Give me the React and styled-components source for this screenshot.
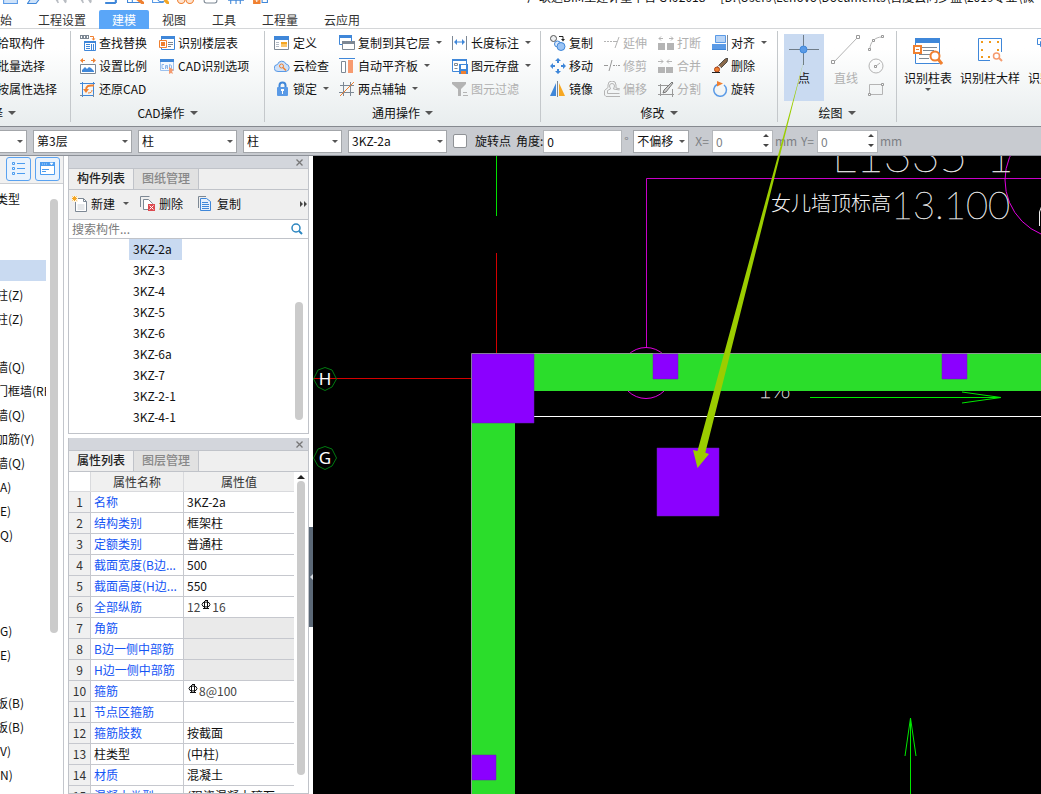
import React from "react";
import styled, { createGlobalStyle, css } from "styled-components";

const GlobalStyle = createGlobalStyle`
  *, *::before, *::after { box-sizing: border-box; }
  body {
    margin: 0;
    overflow: hidden;
    background: #fff;
    color: #111;
    font: 12px/16px "Noto Sans CJK SC", "Noto Sans", sans-serif;
  }
  button, input, select { font: inherit; color: inherit; margin: 0; }
  svg { display: block; flex: none; }
`;

const BLUE = "#3f87d9";
const SOFT = "#5a9ae6";
const ORANGE = "#f08030";
const GREY = "#7d8894";
const OFF = "#b4b4b4";

/* ---------- icons ---------- */

const ICONS = {
  find: (
    <>
      <path d="M0 0h9v4H0z" fill={GREY} /><path d="M1 1h1v2H1zM4 1h1v2H4zM7 1h1v2H7z" fill="#fff" />
      <path d="M10 1.500h3.500V4" fill="none" stroke={ORANGE} /><path d="M11.500 3.500h4l-2 2z" fill={ORANGE} />
      <path d="M4.500 6.500h11v9h-11z" fill="#fff" stroke={BLUE} /><path d="M4 6h12v2H4z" fill={BLUE} />
      <path d="M6 9.500h4M6 11.500h4M6 13.500h4M11.500 9v6M13.500 9v6" stroke={BLUE} />
    </>
  ),
  scale: (
    <>
      <path d="M0 2.500L3 0v2h2v1H3v2zM16 2.500L13 0v2h-2v1h2v2z" fill={ORANGE} />
      <path d="M.5 6.500h15v9H.5z" fill="#fff" stroke={GREY} /><path d="M2 14v-2l3-3 2 2 2-2 2 1 1 1 2 2v1z" fill={BLUE} />
    </>
  ),
  restore: (
    <>
      <path d="M2.500 1v15M13.500 1v12M0 2.500h15M2 14.500h12" stroke={BLUE} fill="none" /><path d="M0 14.500h3M13.500 13v3" stroke={GREY} />
      <path d="M6 9.500C6 5 8 4 14 4.500" fill="none" stroke={ORANGE} strokeWidth="2" /><path d="M3 8h6l-3 4z" fill={ORANGE} />
      <path d="M8 12c3 0 4-1 4-3" fill="none" stroke={ORANGE} />
    </>
  ),
  floors: (
    <>
      <path d="M2.500 1.500h13v13h-13z" fill="#fff" stroke={BLUE} /><path d="M2 1h14v3H2z" fill={BLUE} />
      <path d="M9 7.500h5M9 9.500h5M9 11.500h3" stroke={GREY} /><path d="M.5 5.500h7v7h-7z" fill="#fff" stroke={ORANGE} /><path d="M2 7h4v4H2z" fill={ORANGE} />
    </>
  ),
  cadopt: (
    <>
      <path d="M1.500 1.500h13v11h-13z" fill="#f4f9ff" stroke="#9cc1ee" /><path d="M1 1h14v3H1z" fill={BLUE} />
      <path d="M5 6.500H3v4h2M6.500 11V7.500h2V11M6.500 9h2M10.500 6.500v4h2v-3z" fill="none" stroke="#8db6ea" />
      <path d="M10 9l5 3-2 1 1 3-2-1-2 1z" fill="#f59c70" />
    </>
  ),
  define: (
    <>
      <path d="M.5 1.500h14v13H.5z" fill="#fff" stroke={GREY} /><path d="M0 1h15v4H0z" fill={BLUE} />
      <path d="M7 7h6v2H7z" fill="#f5a623" /><path d="M7 9h6v3H7z" fill="#fbc66b" /><path d="M2 7.500h3M2 9.500h3M2 11.500h3" stroke="#b4bcc6" />
    </>
  ),
  cloud: (
    <>
      <path d="M4 13.500a3.500 3.500 0 0 1-.5-7A4.500 4.500 0 0 1 12 6a3.800 3.800 0 0 1 0 7.500z" fill="#cfe1f8" stroke={SOFT} />
      <circle cx="7.500" cy="8" r="2" fill="none" stroke={ORANGE} /><path d="M9 9.500l3 3" stroke={ORANGE} strokeWidth="1.500" />
    </>
  ),
  lock: (
    <>
      <path d="M5.500 7V4.500a3 3 0 0 1 6 0V7" fill="none" stroke={BLUE} strokeWidth="2" /><rect x="3" y="6" width="11" height="9" rx="1" fill={SOFT} />
      <path d="M8 8h1v5H8zM7 8h3v2H7z" fill="#fff" />
    </>
  ),
  layers: (
    <>
      <path d="M.5 1.500h12v8H.5z" fill="#fff" stroke={BLUE} /><path d="M0 0h13v3H0z" fill={BLUE} />
      <path d="M3.500 6.500h12v8h-12z" fill="#fff" stroke={GREY} /><path d="M3 6h13v3H3z" fill={GREY} />
    </>
  ),
  align: (
    <>
      <path d="M0 0h16v1H0z" fill={BLUE} /><path d="M2.500 3.500h4v11h-4z" fill="#fff" stroke={GREY} /><path d="M9 2h5v13H9z" fill="#f79b70" />
    </>
  ),
  axis: (
    <>
      <path d="M4.500 1v14M11.500 1v14M1 4.500h14M0 11.500h15" stroke={GREY} fill="none" /><path d="M1 15L15 1" stroke={ORANGE} fill="none" />
    </>
  ),
  length: (
    <>
      <path d="M.5 1v14M14.500 1v14" stroke={GREY} /><path d="M2 7l3-3v2.500h5V4l3 3-3 3V7.500H5V10z" fill={BLUE} />
    </>
  ),
  save: (
    <>
      <path d="M.5 1.500h14v12H.5z" fill="#fff" stroke={BLUE} /><path d="M0 1h15v2H0z" fill={BLUE} />
      <path d="M2.500 5.500h3v2h-3zM2.500 10.500h3" stroke={GREY} fill="none" /><path d="M7 6h9v10H7z" fill={BLUE} /><path d="M9 7h5v4H9z" fill="#fff" /><path d="M9 13h5v3H9z" fill={ORANGE} />
    </>
  ),
  filter: (
    <>
      <path d="M0 1h14v2L9 8v7H6V8L0 3z" fill={OFF} /><path d="M11 11.500h4M11 14.500h5" stroke={OFF} />
    </>
  ),
  copy: (
    <>
      <circle cx="3.500" cy="3.500" r="3" fill="#eef0f2" stroke="#555" /><path d="M9 1.500h4V5" fill="none" stroke="#222" /><path d="M11 4h4l-2 2.500z" fill="#222" />
      <circle cx="7.500" cy="9" r="3" fill="#dfeafa" stroke={BLUE} /><circle cx="11" cy="11.500" r="4" fill="#9cc4f4" stroke={BLUE} />
    </>
  ),
  move: (
    <path d="M8 0l3 3H9v2H7V3H5zM8 16l-3-3h2v-2h2v2h2zM0 8l3-3v2h2v2H3v2zM16 8l-3 3V9h-2V7h2V5z" fill={BLUE} />
  ),
  mirror: (
    <>
      <path d="M6 2v13H0z" fill={BLUE} /><path d="M9 2v13h6z" fill="#f7a823" /><path d="M7.500 0v16" stroke={GREY} />
    </>
  ),
  extend: <path d="M0 6.500h2M3 6.500h2M6 6.500h2M9 6.500h4M15 2l-4 11" stroke={OFF} fill="none" />,
  trim: <path d="M0 7.500h4M9 7.500h2M12 7.500h1M14 7.500h2M8 2L5 13" stroke="#999" fill="none" />,
  offset: (
    <path d="M6.500 8l-1-3a2.500 2.500 0 1 1 5 0l-1 3 6 1M15.500 12.500h-12v-3L6.500 8M16 15.500H2L.5 14V9.500L4 6.500V4a4 4 0 0 1 8 0v3l4 1" fill="none" stroke={OFF} />
  ),
  breakup: (
    <>
      <path d="M0 8h7v7H0zM9 8h7v7H9z" fill={OFF} /><path d="M1 3.500h4M3 1.500l-2 2 2 2M15 3.500h-4M13 1.500l2 2-2 2" stroke={OFF} fill="none" />
    </>
  ),
  merge: (
    <>
      <path d="M0 9h7v6H0zM8 9h7v6H8z" fill={OFF} /><path d="M0 3.500h5M3 1.500l2 2-2 2M14 3.500H9M11 1.500l-2 2 2 2" stroke={OFF} fill="none" />
    </>
  ),
  split: (
    <>
      <path d="M0 4.500h10M2.500 3v12M0 13.500h16M14.500 8v8" stroke="#999" fill="none" /><path d="M5 12l1-3 8-8 1 1-7 9z" fill="#ccc" stroke="#777" />
    </>
  ),
  alignto: (
    <>
      <path d="M3.500.5h10v7h-10z" fill="#b8d4f6" stroke={SOFT} /><path d="M0 9h14v6H0z" fill={SOFT} /><path d="M0 14.500h14" stroke={BLUE} /><path d="M15.500 0v16" stroke={GREY} />
    </>
  ),
  erase: (
    <>
      <path d="M5 9L13 1l3-1-1 4-7 7z" fill="#8a6a4c" stroke="#333" strokeWidth=".8" /><path d="M6 8l3 3" stroke="#eee" strokeWidth="2" /><circle cx="5" cy="11.500" r="2.500" fill={ORANGE} stroke="#a8421a" /><path d="M0 14.500h8" stroke="#222" />
    </>
  ),
  rotate: (
    <>
      <path d="M5 3.500a6.300 6.300 0 1 0 7 .5" fill="none" stroke={SOFT} strokeWidth="1.500" /><path d="M5 0l6 2.500L5 5.500z" fill={ORANGE} />
    </>
  ),
  arc: (
    <>
      <path d="M2 14C2 7 7 2 14 2" fill="none" stroke={OFF} /><path d="M.5 13.500h2v2h-2zM13.500.5h2v2h-2zM4.500 4.500h2v2h-2z" fill="#fff" stroke="#999" />
    </>
  ),
  circle: (
    <>
      <circle cx="8" cy="8" r="7" fill="none" stroke={OFF} /><path d="M8 8l4-3" stroke={OFF} /><path d="M6.500 7.500h2v2h-2z" fill="#fff" stroke="#999" />
    </>
  ),
  rect: (
    <>
      <path d="M1.500 3.500h13v10h-13z" fill="none" stroke={OFF} /><path d="M.5 12.500h2v2h-2zM13.500 2.500h2v2h-2z" fill="#fff" stroke="#999" />
    </>
  ),
  create: (
    <>
      <path d="M3.500 2.500h8l3 3v10h-11z" fill="#fff" stroke={GREY} /><path d="M11.500 2.500v3h3" fill="none" stroke={GREY} /><path d="M5.500 9h7M5.500 11h7M5.500 13h7" stroke="#ccd0d4" />
      <path d="M0 0h6v6H0z" fill="#fdf3df" /><path d="M2.500 0v5M0 2.500h5M.5.5l4 4M4.500.5l-4 4" stroke="#f5a623" />
    </>
  ),
  remove: (
    <>
      <path d="M.5 11V.5h9" fill="none" stroke={GREY} /><path d="M3.500 3.500h5l4 4v6h-9z" fill="#fff" stroke={GREY} /><path d="M8 8h7v7H8z" fill="#dd4a50" /><path d="M9.500 9.500l4 4M13.500 9.500l-4 4" stroke="#fff" />
    </>
  ),
  duplicate: (
    <>
      <path d="M.5 12V.500H8" fill="none" stroke={GREY} /><path d="M2.500 2.500h6l4 3v9h-10z" fill="#e6f0fc" stroke={BLUE} /><path d="M4 6.500h6M4 8.500h7M4 10.500h7M4 12.500h7" stroke={BLUE} />
    </>
  ),
  search: (
    <>
      <circle cx="7" cy="7" r="4" fill="none" stroke="#2c86c0" strokeWidth="1.500" /><path d="M10 10l3 3" stroke="#2c86c0" strokeWidth="2" />
    </>
  ),
  outline: (
    <>
      <path d="M1.500 1.500h2v2h-2zM1.500 6.500h2v2h-2zM1.500 11.500h2v2h-2z" fill="none" stroke="#4b9cf0" /><path d="M6 2.500h8M6 7.500h8M6 12.500h8" stroke="#4b9cf0" />
    </>
  ),
  window: (
    <>
      <path d="M.5 1.500h14v12H.5z" fill="#fff" stroke="#4b9cf0" /><path d="M0 1h15v4H0z" fill="#4b9cf0" /><path d="M2 3h1M4 3h1M6 3h1M10 2h3l-1.500 2z" stroke="#fff" fill="#fff" strokeWidth=".6" />
      <path d="M2 8.500h7M2 10.500h4" stroke="#4b9cf0" />
    </>
  ),
  qNew: <path d="M1.500.5h13v15h-13z" fill="#cfe3fa" stroke={SOFT} />,
  qOpen: <path d="M.5 15.500h8l7-9h-9z" fill="#cfe3fa" stroke={BLUE} />,
  qUndo: <path d="M3 10l3 5M6 10l-1 3M10 10l3 5M13 10v4" fill="none" stroke="#b8bcc2" strokeWidth="1.500" />,
  qSum: <path d="M3 15h10M4 12l2-4M13 12v3" fill="none" stroke={BLUE} strokeWidth="2" />,
  qView: (
    <>
      <path d="M.5 3.500h13v11H.5zM5 3v12" fill="#fff" stroke={BLUE} /><path d="M7 9l9 7" stroke={ORANGE} strokeWidth="3" />
    </>
  ),
  qZoom: (
    <>
      <path d="M.5 3.500h10v11H.5z" fill="#fff" stroke={SOFT} /><circle cx="9" cy="10" r="4" fill="#fff" stroke={BLUE} /><path d="M12 12l4 4" stroke="#f5a623" strokeWidth="3" />
    </>
  ),
  qGlass: (
    <>
      <circle cx="4" cy="12" r="3.500" fill="#fde3d0" stroke={ORANGE} /><circle cx="12" cy="12" r="3.500" fill="#fde3d0" stroke={ORANGE} />
    </>
  ),
  qBox: <rect x="2" y="4" width="12" height="11" rx="2" fill="#fff" stroke={GREY} />,
  qGrid: <path d="M1 12.500h15M3.500 2v14M8.500 2v14M12.500 2v14" fill="none" stroke={BLUE} />,
  qSplit: (
    <>
      <path d="M1 7h7v9H1z" fill={ORANGE} /><path d="M4.500 10v4M2.500 12h4" stroke="#fff" /><path d="M9.500 7.500h5v7h-5z" fill="#fff" stroke={BLUE} />
    </>
  ),
};

const Icon = ({ name, size = 16 }) => (
  <svg width={size} height={size} viewBox="0 0 16 16" aria-hidden="true">{ICONS[name]}</svg>
);

const PointIcon = () => (
  <svg width="30" height="30" viewBox="0 0 30 30" aria-hidden="true">
    <path d="M14.500 0v30M0 14.500h30" stroke="#6f7c88" /><circle cx="14.500" cy="14.500" r="3.500" fill={SOFT} stroke={BLUE} />
  </svg>
);
const LineIcon = () => (
  <svg width="30" height="30" viewBox="0 0 30 30" aria-hidden="true">
    <path d="M3 27L26 3" stroke={OFF} /><path d="M.5 25.500h3v3h-3zM25.500.5h3v3h-3z" fill="#fff" stroke="#999" />
  </svg>
);
const ColumnTableIcon = () => (
  <svg width="30" height="30" viewBox="0 0 30 30" aria-hidden="true">
    <path d="M2.500 3.500h24v25h-24z" fill="#fff" stroke={BLUE} /><path d="M2 3h25v5H2z" fill={BLUE} />
    <path d="M6 12.500h18M10 15.500h11M6 19.500h12M6 23.500h10" stroke={GREY} />
    <path d="M1 11h7v7H1z" fill="#fff" stroke={ORANGE} strokeWidth="2" /><path d="M3 14.500h3" stroke={ORANGE} />
    <circle cx="22" cy="21" r="4.500" fill="#fff" stroke={ORANGE} strokeWidth="2" /><path d="M25 24l4 5" stroke={ORANGE} strokeWidth="3" />
  </svg>
);
const ColumnDetailIcon = () => (
  <svg width="30" height="30" viewBox="0 0 30 30" aria-hidden="true">
    <path d="M15 25.500H3.500v-22h23V17" fill="#fff" stroke={BLUE} />
    <path d="M6 6h2v2H6zM14 6h2v2h-2zM22 6h2v2h-2zM6 14h2v2H6zM6 21h2v2H6zM13 21h2v2h-2zM22 14h2v2h-2z" fill="#f09a1c" />
    <circle cx="21.500" cy="21" r="3" fill="#fff" stroke="#f59c70" strokeWidth="1.500" /><path d="M24 23l3 3" stroke="#f59c70" strokeWidth="2" />
  </svg>
);
const LayoutIcon = () => (
  <svg width="30" height="30" viewBox="0 0 30 30" aria-hidden="true">
    <path d="M.5 3.500h10v6H.5zM3.500 6.500h14v5h-14z" fill="#fff" stroke={BLUE} />
  </svg>
);

/* ---------- shared pieces ---------- */

const Caret = styled.span`
  flex: none;
  width: 0;
  height: 0;
  margin-left: ${(p) => p.$gap ?? 5}px;
  border: ${(p) => (p.$big ? 4 : 3)}px solid transparent;
  border-bottom-width: 0;
  border-top-color: #555;
`;

const PlainButton = styled.button`
  display: flex;
  align-items: center;
  padding: 0;
  border: 0;
  background: none;
  white-space: nowrap;
  color: ${(p) => (p.disabled ? "#b0b0b0" : "#111")};
`;

/* ---------- frame ---------- */

const Page = styled.div`
  position: relative;
  display: flex;
  flex-direction: column;
  height: 100vh;
  overflow: hidden;
`;

const TitleBar = styled.header`
  display: flex;
  align-items: flex-end;
  height: 10px;
  padding-bottom: 6px;
  overflow: hidden;
`;
const QuickTools = styled.div`
  display: flex;
  flex: none;
  width: 527px;
  gap: 8px;
  padding-left: 2px;
`;
const Title = styled.div`
  flex: 1;
  overflow: hidden;
  line-height: 14px;
  white-space: nowrap;
`;

const MenuTabs = styled.nav`
  display: flex;
  flex: none;
  height: 19px;
  border-bottom: 1px solid #d4d6d8;
`;
const MenuTab = styled.button`
  flex: none;
  height: 19px;
  padding: 0 13px;
  border: 0;
  border-radius: 2px 2px 0 0;
  line-height: 16px;
  background: ${(p) => (p.$active ? "#5aa6f8" : "transparent")};
  color: ${(p) => (p.$active ? "#fff" : "#333")};
  &:first-child { margin-left: -13px; }
`;

const Ribbon = styled.div`
  display: flex;
  flex: none;
  height: 98px;
  padding: 2px 0 4px;
  overflow: hidden;
  border-bottom: 1px solid #85898f;
  background: linear-gradient(#fff 20%, #e8edee);
`;
const Group = styled.section`
  display: flex;
  flex: none;
  flex-direction: column;
  width: ${(p) => p.$width}px;
  border-right: 1px solid #c4c8cb;
`;
const GroupBody = styled.div`
  display: flex;
  height: 73px;
  gap: ${(p) => p.$gap ?? 0}px;
  padding-left: ${(p) => p.$inset ?? 9}px;
`;
const Column = styled.div`
  display: grid;
  grid-auto-rows: 23px;
  align-items: center;
`;
const GroupTitle = styled.button`
  display: flex;
  align-items: center;
  justify-content: center;
  width: 100%;
  height: 18px;
  padding: 0;
  border: 0;
  background: none;
`;
const ClippedColumn = styled(Column)`
  margin-left: -3px;
`;
const ClippedTitle = styled(GroupTitle)`
  justify-content: flex-start;
  margin-left: -9px;
`;
const Tool = styled(PlainButton)`
  height: 23px;
  gap: 3px;
  ${Caret} { margin-left: 3px; }
`;
const BigTool = styled(PlainButton)`
  flex: none;
  flex-direction: column;
  height: 67px;
  min-width: ${(p) => p.$min ?? 34}px;
  margin-top: 3px;
  padding: 1px 2px 0;
  gap: 5px;
  background: ${(p) => (p.$active ? "#c9daf1" : "transparent")};
  ${Caret} { margin-left: 0; margin-top: -3px; }
`;
const DrawTools = styled(GroupBody)`
  gap: 5px;
  padding-left: 6px;
`;
const RecogniseTools = styled(GroupBody)`
  gap: 4px;
  padding-left: 5px;
`;

/* ---------- options bar ---------- */

const OptionsBar = styled.div`
  display: flex;
  flex: none;
  align-items: center;
  height: 29px;
  overflow: hidden;
  border-bottom: 1px solid #8d9198;
  background: #c8cbd0;
  white-space: nowrap;
`;
const SelectBox = styled.span`
  position: relative;
  flex: none;
  width: ${(p) => p.$width}px;
  height: 23px;
  margin-right: 6px;
  &:first-child { margin-left: -72px; }
  select {
    width: 100%;
    height: 100%;
    padding: 0 3px;
    appearance: none;
    border: 1px solid #a3a6aa;
    border-radius: 0;
    background: #fff;
  }
  ${Caret} {
    position: absolute;
    top: 10px;
    right: 4px;
    pointer-events: none;
  }
`;
const CheckLabel = styled.label`
  display: flex;
  align-items: center;
  gap: 8px;
  margin-right: 5px;
  input {
    width: 14px;
    height: 14px;
    appearance: none;
    border: 1px solid #8f9296;
    border-radius: 2px;
    background: #fff;
  }
`;
const FieldLabel = styled.label`
  display: flex;
  align-items: center;
  color: ${(p) => (p.$muted ? "#7c7f84" : "#111")};
  gap: ${(p) => (p.$muted ? 3 : 0)}px;
`;
const NumberBox = styled.span`
  position: relative;
  width: ${(p) => p.$width}px;
  height: 23px;
  input {
    width: 100%;
    height: 100%;
    padding: 0 3px;
    border: 1px solid #b4b7bb;
    border-radius: 0;
    background: #fff;
  }
`;
const Spinner = styled.svg`
  position: absolute;
  top: 4px;
  right: 4px;
`;
const Unit = styled.span`
  width: ${(p) => p.$width}px;
  padding-left: 2px;
  color: #7c7f84;
`;

const Select = ({ value, width, label }) => (
  <SelectBox $width={width}>
    <select aria-label={label} defaultValue={value}><option>{value}</option></select>
    <Caret />
  </SelectBox>
);
const Stepper = () => (
  <NumberBox $width={61}>
    <input defaultValue="0" />
    <Spinner width="6" height="14" viewBox="0 0 6 14" aria-hidden="true">
      <path d="M0 3l3-3 3 3zM0 10l3 3 3-3z" fill="#444" />
    </Spinner>
  </NumberBox>
);

/* ---------- workspace ---------- */

const Workspace = styled.main`
  display: flex;
  flex: 1;
  min-height: 0;
`;
const TypePanel = styled.aside`
  display: flex;
  flex: none;
  flex-direction: column;
  width: 64px;
  border-right: 1px solid #c3c6cc;
  overflow: hidden;
`;
const TypeHeader = styled.div`
  display: flex;
  flex: none;
  gap: 4px;
  height: 28px;
  padding: 1px 0 0 6px;
  border-bottom: 1px solid #cccfd3;
  background: #f1f1f1;
`;
const ViewButton = styled.button`
  display: grid;
  place-items: center;
  width: 25px;
  height: 24px;
  padding: 0;
  border: 1px solid #5aa2f0;
  border-radius: 3px;
  background: #eaf3fd;
`;
const TypeBody = styled.div`
  display: flex;
  flex: 1;
  min-height: 0;
`;
const TypeList = styled.ul`
  flex: none;
  width: 46px;
  margin: 4px 4px 0 0;
  padding: 0;
  overflow: hidden;
  list-style: none;
`;
const TypeRow = styled.li`
  display: flex;
  align-items: center;
  height: 21px;
  margin-bottom: 3px;
  background: ${(p) => (p.$selected ? "#c9daf1" : "transparent")};
  span { margin-left: -4px; white-space: nowrap; }
`;
const Thumb = styled.div`
  flex: none;
  width: 8px;
  height: ${(p) => p.$height}px;
  margin-top: ${(p) => p.$top}px;
  border-radius: 4px;
  background: #cbcbcb;
`;

const Docks = styled.div`
  display: flex;
  flex: none;
  flex-direction: column;
  gap: 4px;
  width: 241px;
  margin-left: 4px;
`;
const Dock = styled.section`
  display: flex;
  flex-direction: column;
  flex: ${(p) => (p.$fill ? "1" : "none")};
  min-height: 0;
  border: 1px solid #c0c3c9;
  border-top: 0;
  overflow: hidden;
`;
const DockBar = styled.div`
  display: flex;
  flex: none;
  justify-content: flex-end;
  align-items: center;
  height: 12px;
  padding-right: 5px;
  background: #d3d6dc;
`;
const CloseButton = styled.button`
  padding: 0;
  border: 0;
  background: none;
`;
const DockTabs = styled.div`
  display: flex;
  flex: none;
  height: 22px;
  border-top: 1px solid #c0c3c9;
  border-bottom: 1px solid #c0c3c9;
  background: #efefef;
`;
const DockTab = styled.button`
  width: 65px;
  padding: 0 0 2px 8px;
  border: 0;
  border-right: 1px solid #c0c3c9;
  text-align: left;
  line-height: 18px;
  background: ${(p) => (p.$active ? "#efefef" : "#e1e1e1")};
  color: ${(p) => (p.$active ? "#222" : "#888")};
  font-weight: 500;
`;
const ListTools = styled.div`
  display: flex;
  flex: none;
  align-items: center;
  height: 30px;
  padding: 0 1px 2px 3px;
  border-bottom: 1px solid #c0c3c9;
  background: #efefef;
`;
const ListTool = styled(PlainButton)`
  gap: 3px;
  margin-right: ${(p) => p.$after ?? 12}px;
`;
const MoreButton = styled(PlainButton)`
  margin-left: auto;
`;
const SearchRow = styled.label`
  display: flex;
  flex: none;
  align-items: center;
  height: 19px;
  padding: 0 3px;
  border-bottom: 1px solid #c0c3c9;
  input {
    flex: 1;
    min-width: 0;
    padding: 0;
    border: 0;
    outline: 0;
    line-height: 16px;
  }
  input::placeholder { color: #7b7b7b; opacity: 1; }
`;
const ListBody = styled.div`
  display: flex;
  justify-content: space-between;
  height: 194px;
  padding: 0 5px 0 60px;
`;
const Items = styled.ul`
  margin: 0;
  padding: 0;
  list-style: none;
`;
const Item = styled.li`
  width: 53px;
  height: 21px;
  padding-left: 4px;
  line-height: 19px;
  background: ${(p) => (p.$selected ? "#c9daf1" : "transparent")};
`;

const PropertyBody = styled.div`
  display: flex;
  flex: 1;
  min-height: 0;
  overflow: hidden;
`;
const ScrollColumn = styled.div`
  display: flex;
  flex-direction: column;
  align-items: center;
  width: 14px;
  padding-top: 3px;
`;
const PropertyTable = styled.table`
  flex: none;
  width: 225px;
  height: max-content;
  table-layout: fixed;
  border-collapse: separate;
  border-spacing: 0;
  th, td {
    height: 21px;
    padding: 0 3px;
    border-right: 1px solid #c6c8ce;
    border-bottom: 1px solid #c6c8ce;
    line-height: 16px;
    text-align: left;
    font-weight: 400;
    white-space: nowrap;
    overflow: hidden;
  }
  th:last-child, td:last-child { border-right: 0; }
  thead th { height: 20px; text-align: center; background: #f0f0f0; color: #333; border-color: #d9dadd; }
  thead th:first-child { background: #fff; }
  tbody th { padding: 0; text-align: center; background: #f0f0f0; color: #333; }
`;
const NameCell = styled.td`
  color: ${(p) => (p.$private ? "#111" : "#1455f5")};
`;
const ValueCell = styled.td`
  background: ${(p) => (p.$locked ? "#eaeaea" : "#fff")};
`;
const Rebar = styled.span`
  display: flex;
  align-items: flex-start;
  color: #444;
`;
const RebarMark = () => (
  <svg width="12" height="12" viewBox="0 0 12 12" role="img" aria-label="Φ">
    <path d="M4.500 2v8M7.500 2v8M3 9.500h6M5 1.500h3" fill="none" stroke="#111" />
    <ellipse cx="6" cy="5.500" rx="4" ry="2.500" fill="none" stroke="#111" />
  </svg>
);

const Gutter = styled.div`
  flex: none;
  width: 4px;
`;
const CollapseHandle = styled.button`
  display: grid;
  place-items: center;
  width: 4px;
  height: 100px;
  margin-top: 371px;
  padding: 0;
  border: 0;
  background: #5b6876;
`;
const Canvas = styled.div`
  flex: 1;
  min-width: 0;
  overflow: hidden;
  background: #000;
`;
const Drawing = styled.svg`
  width: 100%;
  height: 100%;
`;
const cadFill = css`
  fill: #e8e8e8;
  stroke: #e8e8e8;
  stroke-width: 0.4px;
`;
const CadText = styled.text`
  ${cadFill}
  font-family: "Liberation Sans Narrow", Lato, sans-serif;
  font-weight: 100;
  font-size: ${(p) => p.$size}px;
`;
const CadNote = styled.text`
  fill: #f4f4f4;
  font-family: "Noto Sans CJK SC", sans-serif;
  font-weight: 300;
  font-size: 20px;
`;
const AxisName = styled.text`
  fill: #fff;
  font-family: "Noto Sans", sans-serif;
  font-size: 17px;
  text-anchor: middle;
`;
const Pointer = styled.svg`
  position: absolute;
  top: 0;
  left: 0;
  pointer-events: none;
`;

/* ---------- data ---------- */

const menuTabs = ["始", "工程设置", "建模", "视图", "工具", "工程量", "云应用"];
const quickIcons = ["qNew", "qOpen", "qUndo", "qUndo", "qSum", "qView", "qZoom", "qGlass", "qBox", "qGrid", "qSplit"];

const cadTools = [
  [["find", "查找替换"], ["scale", "设置比例"], ["restore", "还原CAD"]],
  [["floors", "识别楼层表"], ["cadopt", "CAD识别选项"]],
];
const commonTools = [
  [["define", "定义"], ["cloud", "云检查"], ["lock", "锁定", "menu"]],
  [["layers", "复制到其它层", "menu"], ["align", "自动平齐板", "menu"], ["axis", "两点辅轴", "menu"]],
  [["length", "长度标注", "menu"], ["save", "图元存盘", "menu"], ["filter", "图元过滤", "off"]],
];
const editTools = [
  [["copy", "复制"], ["move", "移动"], ["mirror", "镜像"]],
  [["extend", "延伸", "off"], ["trim", "修剪", "off"], ["offset", "偏移", "off"]],
  [["breakup", "打断", "off"], ["merge", "合并", "off"], ["split", "分割", "off"]],
  [["alignto", "对齐", "menu"], ["erase", "删除"], ["rotate", "旋转"]],
];

const types = [
  "", "", "", "柱(Z)", "柱(Z)", "", "墙(Q)", "门框墙(RF)", "墙(Q)", "加筋(Y)", "墙(Q)",
  "(A)", "(E)", "(Q)", "", "", "", "(G)", "(E)", "", "板(B)", "板(B)", "(V)", "(N)",
];

const components = ["3KZ-2a", "3KZ-3", "3KZ-4", "3KZ-5", "3KZ-6", "3KZ-6a", "3KZ-7", "3KZ-2-1", "3KZ-4-1"];

const properties = [
  ["名称", "3KZ-2a"],
  ["结构类别", "框架柱"],
  ["定额类别", "普通柱"],
  ["截面宽度(B边...", "500"],
  ["截面高度(H边...", "550"],
  ["全部纵筋", <Rebar>12<RebarMark />16</Rebar>],
  ["角筋", null],
  ["B边一侧中部筋", null],
  ["H边一侧中部筋", null],
  ["箍筋", <Rebar><RebarMark />8@100</Rebar>],
  ["节点区箍筋", ""],
  ["箍筋肢数", "按截面"],
  ["柱类型", "(中柱)"],
  ["材质", "混凝土"],
  ["混凝土类型", "(现浇混凝土碎石"],
];

/* ---------- composed parts ---------- */

const ToolGroup = ({ title, width, gap, columns }) => (
  <Group $width={width}>
    <GroupBody $gap={gap}>
      {columns.map((tools, i) => (
        <Column key={i}>
          {tools.map(([icon, label, mode]) => (
            <Tool key={label} disabled={mode === "off"}>
              <Icon name={icon} />
              {label}
              {mode === "menu" && <Caret />}
            </Tool>
          ))}
        </Column>
      ))}
    </GroupBody>
    <GroupTitle>{title}<Caret $big /></GroupTitle>
  </Group>
);

const DockHeader = ({ tabs }) => (
  <>
    <DockBar>
      <CloseButton aria-label="关闭">
        <svg width="7" height="7" viewBox="0 0 7 7"><path d="M.5.5l6 6M6.500.5l-6 6" stroke="#777" strokeWidth="1.300" /></svg>
      </CloseButton>
    </DockBar>
    <DockTabs>
      {tabs.map((tab, i) => <DockTab key={tab} $active={i === 0}>{tab}</DockTab>)}
    </DockTabs>
  </>
);

const Plan = () => (
  <Drawing>
    <g transform="translate(-313 -156)" fill="none">
      <path d="M496.500 156v60" stroke="#00e000" />
      <path d="M496.500 253v100M313 378.500h158" stroke="#d40000" />
      <path d="M646.500 348V178.500H1134" stroke="#c800c8" />
      <circle cx="646" cy="373" r="25.500" stroke="#e000e0" />
      <circle cx="1063.500" cy="180" r="58.500" stroke="#e000e0" />
      <CadText x="832" y="172" $size="48">L1335</CadText>
      <CadText x="986" y="172" $size="48">1</CadText>
      <CadNote x="771" y="211">女儿墙顶标高</CadNote>
      <CadText x="891" y="219" $size="38">13.100</CadText>
      <path d="M1039.500 226v-14l3-8" stroke="#eee" />
      <CadText x="758" y="398" $size="24">1%</CadText>
      <path d="M534 416.500h600" stroke="#fff" />
      <path d="M534 353h600v38H534zM471 423h44v500h-44z" fill="#2bdd2b" />
      <path d="M471.500 923V353.500H1134" stroke="#8f9a94" />
      <path d="M472 354h62v69h-62zM653 354h25v25h-25zM942 354h25v25h-25zM472 755h24v25h-24zM657 448h62v68h-62z" fill="#8b00ff" stroke="#6a1fb4" strokeWidth=".5" />
      <path d="M810 397.500h190M962 392l39 5.500-39 5.500M910.500 718v205M905 756l5.500-38 5.500 38" stroke="#00e800" />
      <path d="M325 367.500l7 2.500 4.500 9-4.500 8-7 3.500-7-3.500-4.500-8 4.500-9zM325 446.500l7 2.500 4.500 9-4.500 8-7 3.500-7-3.500-4.500-8 4.500-9z" stroke="#007a10" />
      <AxisName x="325" y="385">H</AxisName>
      <AxisName x="325" y="464">G</AxisName>
    </g>
  </Drawing>
);

export default function App() {
  return (
    <Page>
      <GlobalStyle />
      <TitleBar>
        <QuickTools>
          {quickIcons.map((name, i) => <Icon key={i} name={name} size={17} />)}
        </QuickTools>
        <Title>广联达BIM土建计量平台 GTJ2018 {"\u00a0"}- {"\u00a0"}[D:\Users\Lenovo\Documents\百度云同步盘\2019专业\微</Title>
      </TitleBar>

      <MenuTabs>
        {menuTabs.map((tab) => <MenuTab key={tab} $active={tab === "建模"}>{tab}</MenuTab>)}
      </MenuTabs>

      <Ribbon>
        <Group $width={71}>
          <GroupBody $inset={0}>
            <ClippedColumn>
              <Tool>拾取构件</Tool>
              <Tool>批量选择</Tool>
              <Tool>按属性选择</Tool>
            </ClippedColumn>
          </GroupBody>
          <ClippedTitle>择<Caret $big /></ClippedTitle>
        </Group>
        <ToolGroup title="CAD操作" width={194} gap={12} columns={cadTools} />
        <ToolGroup title="通用操作" width={276} gap={10} columns={commonTools} />
        <ToolGroup title="修改" width={237} gap={11} columns={editTools} />
        <Group $width={119}>
          <DrawTools>
            <BigTool $active $min={40}><PointIcon />点</BigTool>
            <BigTool disabled><LineIcon />直线</BigTool>
            <Column>
              {[["arc", "弧"], ["circle", "圆"], ["rect", "矩形"]].map(([icon, label]) => (
                <Tool key={icon} aria-label={label} disabled><Icon name={icon} /></Tool>
              ))}
            </Column>
          </DrawTools>
          <GroupTitle>绘图<Caret $big /></GroupTitle>
        </Group>
        <RecogniseTools>
          <BigTool><ColumnTableIcon />识别柱表<Caret /></BigTool>
          <BigTool><ColumnDetailIcon />识别柱大样</BigTool>
          <BigTool><LayoutIcon />识别大样</BigTool>
        </RecogniseTools>
      </Ribbon>

      <OptionsBar>
        <Select label="楼栋" value="" width={99} />
        <Select label="楼层" value="第3层" width={99} />
        <Select label="构件大类" value="柱" width={99} />
        <Select label="构件类型" value="柱" width={99} />
        <Select label="构件" value="3KZ-2a" width={99} />
        <CheckLabel><input type="checkbox" />旋转点</CheckLabel>
        <FieldLabel>角度:
          <NumberBox $width={79}><input defaultValue="0" /></NumberBox>
        </FieldLabel>
        <Unit $width={11}>°</Unit>
        <Select label="偏移方式" value="不偏移" width={56} />
        <FieldLabel $muted>X=<Stepper /></FieldLabel>
        <Unit $width={28}>mm</Unit>
        <FieldLabel $muted>Y=<Stepper /></FieldLabel>
        <Unit $width={28}>mm</Unit>
      </OptionsBar>

      <Workspace>
        <TypePanel>
          <TypeHeader>
            <ViewButton aria-label="列表"><Icon name="outline" /></ViewButton>
            <ViewButton aria-label="窗口"><Icon name="window" /></ViewButton>
          </TypeHeader>
          <TypeBody>
            <TypeList>
              <TypeRow><span>类型</span></TypeRow>
              {types.map((type, i) => (
                <TypeRow key={i} $selected={i === 2}><span>{type}</span></TypeRow>
              ))}
            </TypeList>
            <Thumb $top={15} $height={434} />
          </TypeBody>
        </TypePanel>

        <Docks>
          <Dock>
            <DockHeader tabs={["构件列表", "图纸管理"]} />
            <ListTools>
              <ListTool $after={11}><Icon name="create" />新建<Caret /></ListTool>
              <ListTool $after={15}><Icon name="remove" />删除</ListTool>
              <ListTool><Icon name="duplicate" />复制</ListTool>
              <MoreButton aria-label="更多">
                <svg width="7" height="6" viewBox="0 0 7 6"><path d="M0 0l3 3-3 3zM4 0l3 3-3 3z" fill="#444" /></svg>
              </MoreButton>
            </ListTools>
            <SearchRow>
              <input aria-label="搜索构件" placeholder="搜索构件..." />
              <Icon name="search" />
            </SearchRow>
            <ListBody>
              <Items>
                {components.map((name, i) => <Item key={name} $selected={i === 0}>{name}</Item>)}
              </Items>
              <Thumb $top={63} $height={118} />
            </ListBody>
          </Dock>

          <Dock $fill>
            <DockHeader tabs={["属性列表", "图层管理"]} />
            <PropertyBody>
              <PropertyTable>
                <colgroup><col width="22" /><col width="93" /><col width="110" /></colgroup>
                <thead>
                  <tr><th /><th>属性名称</th><th>属性值</th></tr>
                </thead>
                <tbody>
                  {properties.map(([name, value], i) => (
                    <tr key={name}>
                      <th scope="row">{i + 1}</th>
                      <NameCell $private={name === "柱类型"}>{name}</NameCell>
                      <ValueCell $locked={value === null}>{value}</ValueCell>
                    </tr>
                  ))}
                </tbody>
              </PropertyTable>
              <ScrollColumn>
                <svg width="8" height="4" viewBox="0 0 8 4" aria-hidden="true"><path d="M0 4l4-4 4 4z" fill="#222" /></svg>
                <Thumb $top={2} $height={294} />
              </ScrollColumn>
            </PropertyBody>
          </Dock>
        </Docks>

        <Gutter>
          <CollapseHandle aria-label="收起">
            <svg width="4" height="6" viewBox="0 0 4 6"><path d="M4 0v6L1 3z" fill="#d5dae0" /></svg>
          </CollapseHandle>
        </Gutter>

        <Canvas><Plan /></Canvas>
      </Workspace>

      <Pointer width="1041" height="480" aria-hidden="true">
        <path d="M804 60L705.300 452.700 709 454 697.500 468 693 450 697.500 451z" fill="#9bcd00" />
      </Pointer>
    </Page>
  );
}
